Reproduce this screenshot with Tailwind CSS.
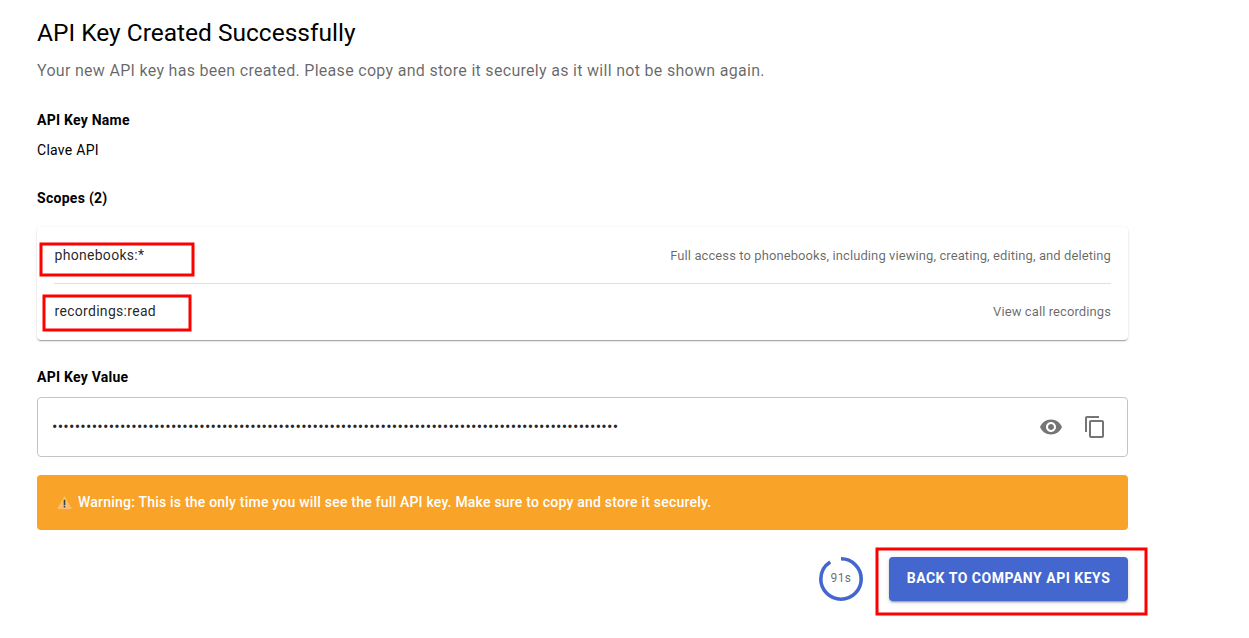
<!DOCTYPE html>
<html lang="en">
<head>
    <meta charset="UTF-8">
    <meta name="viewport" content="width=device-width, initial-scale=1.0">
    <title>API Key Created</title>
    <script src="https://cdn.jsdelivr.net/npm/@tailwindcss/browser@4"></script>
</head>
<body class="min-h-screen bg-white text-black font-[Roboto,sans-serif]">
    <main class="min-h-screen w-[1091px] ml-[37px] pt-[17px]">
        <!-- Heading -->
        <h1 class="text-[24.5px] leading-8">API Key Created Successfully</h1>
        <p class="mt-[10px] text-base leading-6 tracking-[0.3px] text-black/60">Your new API key has been created. Please copy and store it securely as it will not be shown again.</p>

        <!-- Key name -->
        <h2 class="mt-[27px] text-sm leading-5 font-bold tracking-[0.25px]">API Key Name</h2>
        <p class="mt-[10px] text-sm leading-5 tracking-[0.28px]">Clave API</p>

        <!-- Scopes -->
        <h2 class="mt-7 text-sm leading-5 font-bold tracking-[0.28px]">Scopes (2)</h2>
        <div class="mt-[19px] h-[113px] rounded px-[17px] shadow-[0_2px_1px_-1px_rgba(0,0,0,0.2),0_1px_1px_0_rgba(0,0,0,0.14),0_1px_3px_0_rgba(0,0,0,0.12)]">
            <div class="relative flex h-[57px] items-center justify-between border-b border-black/12">
                <span class="ml-[0.5px] text-sm tracking-[0.3px] text-black/87">phonebooks:*</span>
                <span class="pt-px text-[13px] tracking-[0.09px] text-black/60">Full access to phonebooks, including viewing, creating, editing, and deleting</span>
                <svg class="absolute -left-[15px] top-[15px] h-[35px] w-[156px]" fill="none" stroke="#ff0000" stroke-width="3"><rect x="2" y="2" width="152" height="31"/></svg>
            </div>
            <div class="relative flex h-14 items-center justify-between">
                <span class="ml-[0.5px] pb-[2px] text-sm tracking-[0.3px] text-black/87">recordings:read</span>
                <span class="text-[13px] tracking-[0.09px] text-black/60">View call recordings</span>
                <svg class="absolute -left-[12px] top-[10px] h-[38px] w-[150px]" fill="none" stroke="#ff0000" stroke-width="3"><rect x="2" y="2" width="146" height="34"/></svg>
            </div>
        </div>

        <!-- Key value -->
        <h2 class="mt-[27px] text-sm leading-5 font-bold tracking-[0.25px]">API Key Value</h2>
        <div class="mt-[10px] flex h-[60px] items-center rounded border border-[#c4c4c4] pl-[14px] pr-5">
            <span class="flex-1 text-base leading-6 whitespace-nowrap text-black/87 tracking-[0.265px]">••••••••••••••••••••••••••••••••••••••••••••••••••••••••••••••••••••••••••••••••••••••••••••••••••••</span>
            <svg class="size-6 text-[#757575]" viewBox="0 0 24 24" fill="currentColor"><path d="M12 4.5C7 4.5 2.73 7.61 1 12c1.73 4.39 6 7.5 11 7.5s9.27-3.11 11-7.5c-1.73-4.39-6-7.5-11-7.5zM12 17c-2.76 0-5-2.24-5-5s2.24-5 5-5 5 2.24 5 5-2.24 5-5 5zm0-8c-1.66 0-3 1.34-3 3s1.34 3 3 3 3-1.34 3-3-1.34-3-3-3z"/></svg>
            <svg class="ml-5 size-6 text-[#757575]" viewBox="0 0 24 24" fill="currentColor"><path d="M16 1H4c-1.1 0-2 .9-2 2v14h2V3h12V1zm3 4H8c-1.1 0-2 .9-2 2v14c0 1.1.9 2 2 2h11c1.1 0 2-.9 2-2V7c0-1.1-.9-2-2-2zm0 16H8V7h11v14z"/></svg>
        </div>

        <!-- Warning -->
        <div class="mt-[18px] flex h-[55px] items-center rounded bg-[#f9a328] pl-[20px] text-white">
            <svg class="h-[14px] w-[15px]" viewBox="0 0 15 14">
                <defs>
                    <linearGradient id="tri" x1="0" y1="0" x2="0" y2="1"><stop offset="0" stop-color="#f3cb4c"/><stop offset="1" stop-color="#fdbd78"/></linearGradient>
                </defs>
                <path d="M7.5 0 14.8 13H.2z" fill="url(#tri)"/>
                <path d="M6.7 3.8h1.6v5.4H6.7zM6.7 10h1.6v1.6H6.7z" fill="#3d3d4a"/>
            </svg>
            <span class="ml-[6px] pb-px text-sm font-medium tracking-[0.21px]">Warning: This is the only time you will see the full API key. Make sure to copy and store it securely.</span>
        </div>

        <!-- Actions -->
        <div class="mt-[27px] flex h-11 items-center justify-end">
            <div class="relative mr-[26px] size-11">
                <svg class="size-11 -rotate-90" viewBox="22 22 44 44" fill="none" stroke="#4466cf" stroke-width="3.6">
                    <circle cx="44" cy="44" r="20.2" pathLength="100" stroke-dasharray="91 100"/>
                </svg>
                <span class="absolute inset-0 flex items-center justify-center pb-[2px] text-xs tracking-[0.4px] text-black/60">91s</span>
            </div>
            <div class="relative">
                <button class="block h-11 w-[239px] rounded bg-[#4466cf] pb-[2px] text-sm font-bold tracking-[0.52px] whitespace-nowrap text-white shadow-[0_3px_1px_-2px_rgba(0,0,0,0.2),0_2px_2px_0_rgba(0,0,0,0.14),0_1px_5px_0_rgba(0,0,0,0.12)]">BACK TO COMPANY API KEYS</button>
                <svg class="absolute -left-[14px] -top-[10px] h-[69px] w-[273px]" fill="none" stroke="#ff0000" stroke-width="3"><rect x="2" y="2" width="269" height="65"/></svg>
            </div>
        </div>
    </main>
</body>
</html>
